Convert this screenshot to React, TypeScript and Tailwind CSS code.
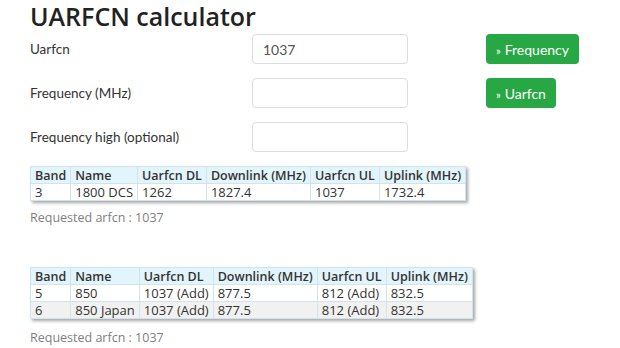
const font = { fontFamily: 'Lato, "Open Sans", sans-serif' };
const tableFont = { fontFamily: '"Open Sans", "Noto Sans", sans-serif' };

type Row = string[];

const head = ['Band', 'Name', 'Uarfcn DL', 'Downlink (MHz)', 'Uarfcn UL', 'Uplink (MHz)'];

function ResultTable({ rows }: { rows: Row[] }) {
  return (
    <table className="border-collapse text-[#333] shadow-[2px_2px_3px_rgba(0,0,0,0.35)]" style={tableFont}>
      <thead>
        <tr className="h-[17px] bg-[#e3f5fc]">
          {head.map((h) => (
            <th key={h} className="border border-[#d3e3ea] px-[4px] py-0 text-[12.5px] leading-[15px] text-left font-semibold whitespace-nowrap">
              {h}
            </th>
          ))}
        </tr>
      </thead>
      <tbody>
        {rows.map((r, i) => (
          <tr key={i} className={i % 2 === 1 ? 'h-[17px] bg-[#f1f1f1]' : 'h-[17px] bg-white'}>
            {r.map((c, j) => (
              <td key={j} className="border border-[#d3e3ea] px-[4px] py-0 text-[13px] leading-[15px] whitespace-nowrap">
                {c}
              </td>
            ))}
          </tr>
        ))}
      </tbody>
    </table>
  );
}

function FormRow({ label, value, button }: { label: string; value?: string; button?: string }) {
  return (
    <div className="flex items-center h-[30px]">
      <label className="w-[222px] text-[13.5px] text-[#333]">{label}</label>
      <input
        readOnly
        value={value ?? ''}
        className="w-[156px] h-[30px] rounded border border-[#d9dde1] px-[10px] text-[14px] text-[#555] outline-none"
      />
      {button && (
        <button className="ml-[78px] h-[30px] rounded bg-[#28a745] px-[10px] text-[14px] text-white">
          <span className="text-[11px] mr-1">»</span>
          {button}
        </button>
      )}
    </div>
  );
}

export default function App() {
  return (
    <div className="w-[620px] h-[348px] bg-white overflow-hidden pl-[30px] pt-[1px]" style={font}>
      <h1 className="text-[25px] font-semibold leading-[30px] text-[#222]" style={tableFont}>
        UARFCN calculator
      </h1>
      <div className="mt-[3px] flex flex-col gap-[14px]">
        <FormRow label="Uarfcn" value="1037" button="Frequency" />
        <FormRow label="Frequency (MHz)" button="Uarfcn" />
        <FormRow label="Frequency high (optional)" />
      </div>
      <div className="mt-[14px]">
        <ResultTable rows={[['3', '1800 DCS', '1262', '1827.4', '1037', '1732.4']]} />
      </div>
      <p className="mt-[9px] text-[12.5px] leading-[16px] text-[#808080]" style={tableFont}>
        Requested arfcn : 1037
      </p>
      <div className="mt-[41px]">
        <ResultTable
          rows={[
            ['5', '850', '1037 (Add)', '877.5', '812 (Add)', '832.5'],
            ['6', '850 Japan', '1037 (Add)', '877.5', '812 (Add)', '832.5'],
          ]}
        />
      </div>
      <p className="mt-[11px] text-[12.5px] leading-[16px] text-[#808080]" style={tableFont}>
        Requested arfcn : 1037
      </p>
    </div>
  );
}
